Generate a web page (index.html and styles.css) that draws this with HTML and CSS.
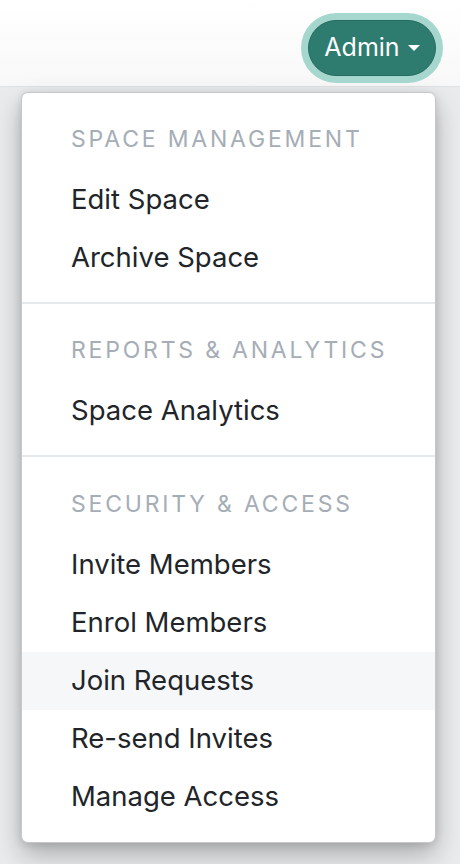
FILE: index.html
```html
<!DOCTYPE html>
<html>
<head>
<meta charset="utf-8">
<link rel="stylesheet" href="styles.css">
</head>
<body>
<header class="topbar">
  <button class="admin-btn">Admin<span class="caret"></span></button>
</header>
<nav class="menu">
  <section class="group">
    <div class="group-title">SPACE MANAGEMENT</div>
    <a class="item">Edit Space</a>
    <a class="item">Archive Space</a>
  </section>
  <section class="group">
    <div class="group-title">REPORTS &amp; ANALYTICS</div>
    <a class="item">Space Analytics</a>
  </section>
  <section class="group">
    <div class="group-title">SECURITY &amp; ACCESS</div>
    <a class="item">Invite Members</a>
    <a class="item">Enrol Members</a>
    <a class="item active">Join Requests</a>
    <a class="item">Re-send Invites</a>
    <a class="item">Manage Access</a>
  </section>
</nav>
</body>
</html>
```
FILE: styles.css
```css
* { box-sizing: border-box; }
html, body { margin: 0; padding: 0; }
body {
  background: #eaebec;
  font-family: Inter, "Noto Sans", sans-serif;
  height: 864px;
  overflow: hidden;
}
.topbar {
  height: 87px;
  background: linear-gradient(#ffffff, #f8f8f8);
  border-bottom: 1px solid #e0e1e2;
  display: flex;
  justify-content: flex-end;
  align-items: flex-start;
  padding: 20px 24px 0 0;
}
.admin-btn {
  height: 56px;
  width: 128px;
  border-radius: 28px;
  background: #2e7b6f;
  border: 1px solid #276a5f;
  box-shadow: 0 0 0 7px #a6d7cf;
  color: #ffffff;
  font-family: Inter, sans-serif;
  font-size: 25px;
  display: flex;
  align-items: center;
  justify-content: center;
  gap: 8px;
  padding: 0 0 2px 0;
}
.caret {
  width: 0;
  height: 0;
  border-left: 6px solid transparent;
  border-right: 6px solid transparent;
  border-top: 6px solid #ffffff;
  margin-top: 2px;
}
.menu {
  margin: 5px 0 0 21px;
  width: 415px;
  background: #ffffff;
  border: 1px solid #c6c7c8;
  border-radius: 7px;
  box-shadow: 0 12px 26px rgba(0, 0, 0, 0.26), 0 2px 8px rgba(0, 0, 0, 0.12);
}
.group {
  padding: 16px 0 15px;
  border-top: 2px solid #e6e9ec;
}
.group:first-child { border-top: 0; }
.group:last-child { padding-top: 17px; padding-bottom: 16px; }
.group-title {
  height: 62px;
  display: flex;
  align-items: center;
  padding: 0 0 2px 49px;
  font-size: 23px;
  letter-spacing: 2.8px;
  color: #a5adb6;
}
.item {
  display: flex;
  align-items: center;
  height: 58px;
  padding: 0 0 2px 49px;
  font-size: 27.5px;
  color: #212529;
}
.item.active { background: #f6f7f9; }
```
